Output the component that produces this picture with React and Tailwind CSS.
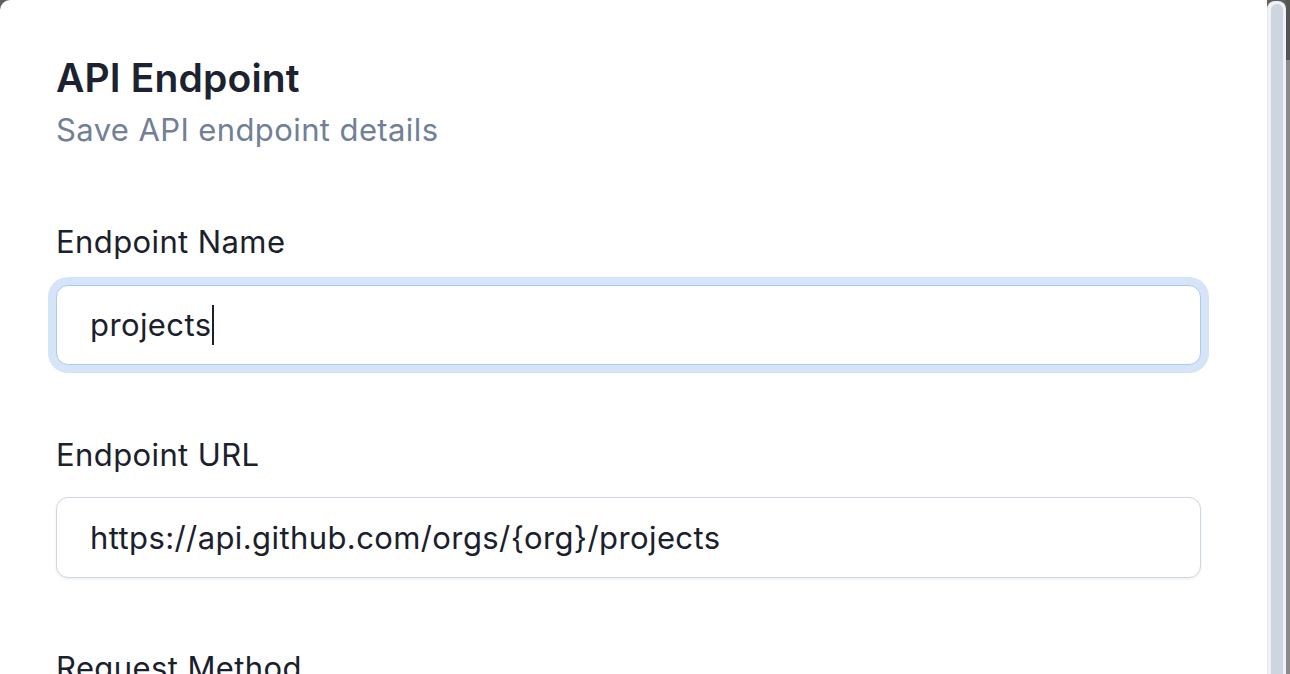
import React from 'react';

const Field = ({ label, value, focused }) => (
    <div className="mt-[71px] first:mt-0">
        <label className="block text-[31px] leading-[38px] tracking-[0.4px] text-[#1a202c]">{label}</label>
        <div
            className={
                focused
                    ? "mt-[24px] h-[80px] rounded-[12px] border border-[#a9c9ef] ring-[8px] ring-[#d5e4f7] flex items-center px-[33px] bg-white"
                    : "mt-[23px] h-[81px] rounded-[12px] border border-[#ced7e2] shadow-[0_1px_3px_rgba(15,23,42,0.08)] flex items-center px-[33px] bg-white"
            }
        >
            <span className="text-[31px] leading-[38px] tracking-[0.4px] text-[#1a202c]">{value}</span>
            {focused && <span className="ml-[1px] w-[2px] h-[40px] bg-[#1a202c]" />}
        </div>
    </div>
);

export default function App() {
    return (
        <div className="w-[1290px] h-[674px] overflow-hidden bg-[#5f5f5f] flex" style={{ fontFamily: 'Inter, "Noto Sans", sans-serif' }}>
            <div className="flex-1 bg-white rounded-tl-[10px] pl-[56px] pr-[66px] pt-[55px]">
                <h1 className="text-[39px] leading-[46px] font-[570] tracking-[0.15px] text-[#1c2230]">API Endpoint</h1>
                <p className="mt-[10px] text-[31px] leading-[38px] tracking-[0.4px] text-[#718096]">Save API endpoint details</p>

                <div className="mt-[74px]">
                    <Field label="Endpoint Name" value="projects" focused />
                    <Field label="Endpoint URL" value="https://api.github.com/orgs/{org}/projects" />
                    <Field label="Request Method" value="GET" />
                </div>
            </div>

            {/* scrollbar */}
            <div className="w-[19px] bg-[#f0f2f5] border-l border-[#e6e9ee] rounded-t-[8px] mt-[1px] pt-[3px] flex justify-center">
                <div className="w-[12px] h-[900px] rounded-full bg-[#cdd5df]" />
            </div>
            <div className="w-[4px] flex flex-col">
                <div className="h-[60px] bg-[#555555]" />
                <div className="flex-1 bg-[#8a8a8a]" />
            </div>
        </div>
    );
}
